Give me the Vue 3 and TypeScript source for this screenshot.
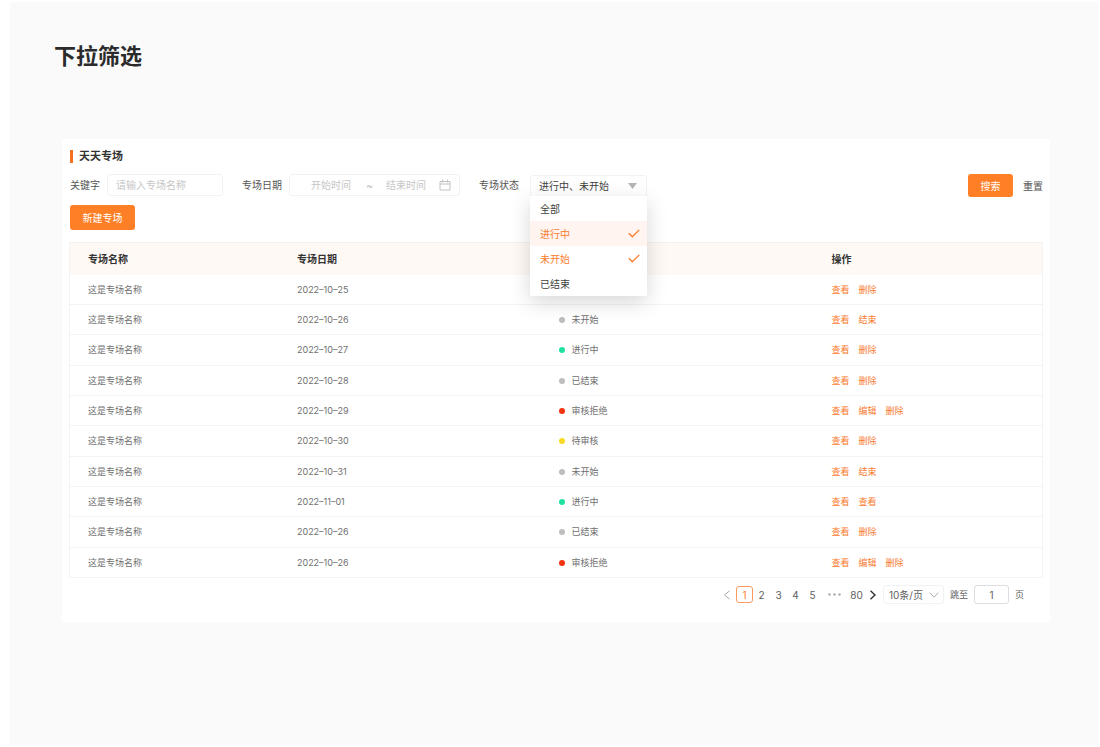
<script setup lang="ts">
import { computed, ref } from 'vue'

type Status = '未开始' | '进行中' | '已结束' | '审核拒绝' | '待审核'

interface Session {
  name: string
  date: string
  status?: Status
  actions: string[]
}

const tone: Record<Status, string> = {
  未开始: 'idle',
  已结束: 'idle',
  进行中: 'active',
  审核拒绝: 'rejected',
  待审核: 'pending',
}

const sessions: Session[] = [
  { name: '这是专场名称', date: '2022-10-25', actions: ['查看', '删除'] },
  { name: '这是专场名称', date: '2022-10-26', status: '未开始', actions: ['查看', '结束'] },
  { name: '这是专场名称', date: '2022-10-27', status: '进行中', actions: ['查看', '删除'] },
  { name: '这是专场名称', date: '2022-10-28', status: '已结束', actions: ['查看', '删除'] },
  { name: '这是专场名称', date: '2022-10-29', status: '审核拒绝', actions: ['查看', '编辑', '删除'] },
  { name: '这是专场名称', date: '2022-10-30', status: '待审核', actions: ['查看', '删除'] },
  { name: '这是专场名称', date: '2022-10-31', status: '未开始', actions: ['查看', '结束'] },
  { name: '这是专场名称', date: '2022-11-01', status: '进行中', actions: ['查看', '查看'] },
  { name: '这是专场名称', date: '2022-10-26', status: '已结束', actions: ['查看', '删除'] },
  { name: '这是专场名称', date: '2022-10-26', status: '审核拒绝', actions: ['查看', '编辑', '删除'] },
]

const formatDate = (date: string) => date.replace(/-/g, '–')

const keyword = ref('')
const startDate = ref('')
const endDate = ref('')

const options = ['全部', '进行中', '未开始', '已结束']
const chosen = ref<string[]>(['进行中', '未开始'])
const open = ref(true)
const chosenText = computed(() => chosen.value.join('、') || '全部')

function toggle(option: string) {
  if (option === '全部') {
    chosen.value = []
    return
  }
  chosen.value = chosen.value.includes(option)
    ? chosen.value.filter((item) => item !== option)
    : [...chosen.value, option]
}

function reset() {
  keyword.value = ''
  startDate.value = ''
  endDate.value = ''
  chosen.value = []
}

const pages = [1, 2, 3, 4, 5]
const lastPage = 80
const page = ref(1)
const pageSize = ref('10')
const jump = ref('1')
</script>

<template>
  <main class="canvas">
    <h1 class="heading">下拉筛选</h1>

    <section class="card">
      <h2 class="card-title">天天专场</h2>

      <form class="filters" @submit.prevent>
        <label class="label" for="keyword">关键字</label>
        <input id="keyword" v-model="keyword" class="field keyword" type="text" placeholder="请输入专场名称" />

        <label class="label spaced" for="start">专场日期</label>
        <div class="field range">
          <input id="start" v-model="startDate" type="text" placeholder="开始时间" />
          <span class="tilde">~</span>
          <input v-model="endDate" type="text" placeholder="结束时间" aria-label="结束时间" />
          <svg class="calendar" viewBox="0 0 12 12" aria-hidden="true">
            <path d="M1 2.500h10v8.500h-10zM1 5h10M3.500 .5v3M8.500 .5v3" />
          </svg>
        </div>

        <span id="status-label" class="label spaced">专场状态</span>
        <div class="status">
          <button
            class="status-trigger"
            type="button"
            aria-haspopup="listbox"
            aria-labelledby="status-label status-value"
            :aria-expanded="open"
            @click="open = !open"
          >
            <span id="status-value">{{ chosenText }}</span>
            <svg class="caret" viewBox="0 0 9 6" aria-hidden="true"><path d="M0 0h9L4.500 6z" /></svg>
          </button>
          <div v-if="open" class="menu" role="listbox" aria-multiselectable="true" aria-labelledby="status-label">
            <button
              v-for="option in options"
              :key="option"
              type="button"
              role="option"
              class="option"
              :class="{ chosen: chosen.includes(option), current: option === '进行中' }"
              :aria-selected="chosen.includes(option)"
              @click="toggle(option)"
            >
              {{ option }}
              <svg v-if="chosen.includes(option)" class="tick" viewBox="0 0 12 9" aria-hidden="true">
                <path d="M.8 4.300L4.300 7.800L11.300 .9" />
              </svg>
            </button>
          </div>
        </div>

        <div class="filter-actions">
          <button class="primary search" type="submit">搜索</button>
          <button class="plain" type="button" @click="reset">重置</button>
        </div>
      </form>

      <button class="primary create" type="button">新建专场</button>

      <table class="table">
        <thead>
          <tr>
            <th class="col-name" scope="col">专场名称</th>
            <th class="col-date" scope="col">专场日期</th>
            <th class="col-status" scope="col" aria-labelledby="status-label"></th>
            <th scope="col">操作</th>
          </tr>
        </thead>
        <tbody>
          <tr v-for="(row, index) in sessions" :key="index">
            <td>{{ row.name }}</td>
            <td>{{ formatDate(row.date) }}</td>
            <td>
              <span v-if="row.status" class="state">
                <i class="dot" :class="tone[row.status]"></i>{{ row.status }}
              </span>
            </td>
            <td>
              <span class="links">
                <a v-for="(action, n) in row.actions" :key="n" href="#" @click.prevent>{{ action }}</a>
              </span>
            </td>
          </tr>
        </tbody>
      </table>

      <nav class="pager" aria-label="分页">
        <button class="page prev" type="button" aria-label="上一页" :disabled="page === 1" @click="page--">
          <svg viewBox="0 0 8 10" aria-hidden="true"><path d="M6.500 .8L1.500 5L6.500 9.200" /></svg>
        </button>
        <button
          v-for="n in pages"
          :key="n"
          class="page"
          :class="{ selected: n === page }"
          type="button"
          @click="page = n"
        >
          {{ n }}
        </button>
        <svg class="dots" viewBox="0 0 13 3" aria-hidden="true">
          <circle cx="1.500" cy="1.500" r="1.200" /><circle cx="6.500" cy="1.500" r="1.200" /><circle cx="11.500" cy="1.500" r="1.200" />
        </svg>
        <button class="page" type="button" @click="page = lastPage">{{ lastPage }}</button>
        <button class="page next" type="button" aria-label="下一页" @click="page++">
          <svg viewBox="0 0 8 10" aria-hidden="true"><path d="M1.500 .8L6 5L1.500 9.200" /></svg>
        </button>
        <span class="size">
          <select v-model="pageSize" aria-label="每页条数">
            <option value="10">10条/页</option>
            <option value="20">20条/页</option>
            <option value="50">50条/页</option>
          </select>
          <svg viewBox="0 0 10 6" aria-hidden="true"><path d="M.6 .7L5 5.200L9.400 .7" /></svg>
        </span>
        <label for="jump">跳至</label>
        <input id="jump" v-model="jump" class="jump" type="text" inputmode="numeric" />
        <span>页</span>
      </nav>
    </section>
  </main>
</template>

<style>
body {
  margin: 0;
  background: #fff;
}
</style>

<style scoped>
.canvas,
.canvas * {
  box-sizing: border-box;
}

.canvas {
  min-height: calc(100vh - 4px);
  margin: 2px 2px 2px 10px;
  padding: 38px 48px 48px 52px;
  background: #fafafa;
  color: #555;
  font-family: Inter, "Noto Sans CJK SC", sans-serif;
  font-size: 10px;
  line-height: 16px;
}

button,
input,
select {
  margin: 0;
  padding: 0;
  border: 0;
  background: none;
  color: inherit;
  font: inherit;
  outline: 0;
}

button {
  cursor: pointer;
}

svg {
  display: block;
  fill: none;
  stroke: currentColor;
}

.heading {
  margin: 0 -8px 67px;
  color: #2b2b2b;
  font-size: 22px;
  font-weight: 700;
  line-height: 32px;
}

.card {
  padding: 9px 7px 18px;
  background: #fff;
}

.card-title {
  display: flex;
  align-items: center;
  gap: 6px;
  margin: 0 0 10px 1px;
  color: #333;
  font-size: 11px;
  font-weight: 700;
  line-height: 16px;
}

.card-title::before {
  width: 3px;
  height: 13px;
  background: #f37021;
  content: "";
}

.filters {
  display: flex;
  align-items: flex-start;
  height: 23px;
  margin-left: 1px;
}

.label {
  line-height: 22px;
  white-space: nowrap;
}

.spaced {
  margin-left: 19px;
}

.field {
  height: 22px;
  margin-left: 7px;
  border: 1px solid #f2f2f2;
  border-radius: 3px;
}

.keyword {
  width: 116px;
  padding: 0 8px;
}

::placeholder {
  color: #c6c6c6;
  opacity: 1;
}

.range {
  display: flex;
  align-items: center;
  width: 171px;
  padding: 0 8px 0 21px;
}

.range input {
  width: 42px;
}

.tilde {
  width: 33px;
  color: #bbb;
  text-align: center;
}

.calendar {
  width: 12px;
  height: 12px;
  margin-left: auto;
  color: #c2c2c2;
}

.status {
  position: relative;
  align-self: flex-end;
  width: 117px;
  margin-left: 11px;
  color: #404040;
}

.status-trigger {
  display: flex;
  align-items: center;
  justify-content: space-between;
  width: 100%;
  height: 22px;
  padding: 0 9px 0 8px;
  border: 1px solid #f2f2f2;
  border-radius: 3px;
}

.caret {
  width: 9px;
  height: 6px;
  fill: #b5b5b5;
  stroke: none;
}

.menu {
  position: absolute;
  z-index: 2;
  top: calc(100% - 1px);
  right: 0;
  left: 0;
  background: #fff;
  box-shadow: 0 6px 20px rgba(0, 0, 0, 0.16);
}

.option {
  display: flex;
  align-items: center;
  justify-content: space-between;
  width: 100%;
  height: 25px;
  padding: 0 7px 0 10px;
}

.option.chosen {
  color: #fa7b2e;
}

.option.current {
  background: #fff4ef;
}

.tick {
  width: 12px;
  height: 9px;
  stroke-width: 1.3;
}

.filter-actions {
  display: flex;
  gap: 10px;
  margin-left: auto;
}

.primary {
  border-radius: 3px;
  background: #ff7f27;
  color: #fff;
}

.search {
  width: 45px;
  height: 23px;
}

.create {
  display: block;
  width: 65px;
  height: 25px;
  margin: 8px 0 12px 1px;
}

.table {
  width: 100%;
  table-layout: fixed;
  border: 1px solid #f3f3f3;
  border-spacing: 0;
  color: #707070;
  font-size: 9px;
}

th,
td {
  padding: 0 0 0 18px;
  text-align: left;
}

th {
  height: 32px;
  background: #fff9f6;
  color: #333;
  font-size: 10px;
  font-weight: 700;
}

td {
  height: 30px;
  border-bottom: 1px solid #f3f3f3;
}

tr:nth-child(3n) td {
  height: 31px;
}

tr:last-child td {
  height: 29px;
  border-bottom: 0;
}

.col-name {
  width: 21.5%;
}

.col-date {
  width: 27%;
}

.col-status {
  width: 28%;
}

.state {
  display: flex;
  align-items: center;
  gap: 6px;
}

.dot {
  width: 6px;
  height: 6px;
  border-radius: 50%;
}

.idle {
  background: #bdbdbd;
}

.active {
  background: #22e0a0;
}

.rejected {
  background: #f2330d;
}

.pending {
  background: #f9d923;
}

.links {
  display: flex;
  gap: 9px;
}

a {
  color: #fa7b2e;
  text-decoration: none;
}

.pager {
  display: flex;
  align-items: center;
  justify-content: flex-end;
  height: 19px;
  margin: 7px 19px 0 0;
  color: #606060;
  font-size: 9px;
}

.page {
  display: grid;
  place-items: center;
  width: 17px;
  height: 17px;
  border-radius: 3px;
  font-size: 10px;
}

.page.selected {
  border: 1px solid #fa9a5e;
  color: #fa7b2e;
}

.page svg {
  width: 8px;
  height: 10px;
}

.prev {
  color: #aaa;
}

.next {
  color: #333;
}

.next svg {
  stroke-width: 1.4;
}

.dots {
  width: 13px;
  height: 3px;
  margin: 0 7px;
  fill: #aaa;
  stroke: none;
}

.size {
  display: grid;
  align-items: center;
  width: 61px;
  height: 19px;
  margin: 0 6px 0 1px;
  border: 1px solid #f2f2f2;
  border-radius: 3px;
}

.size select {
  grid-area: 1 / 1;
  height: 17px;
  padding: 0 18px 0 5px;
  appearance: none;
  font-size: 10px;
}

.size svg {
  grid-area: 1 / 1;
  justify-self: end;
  width: 10px;
  height: 6px;
  margin-right: 5px;
  color: #aaa;
  pointer-events: none;
}

.jump {
  width: 35px;
  height: 19px;
  margin: 0 6px;
  border: 1px solid #ddd;
  border-radius: 3px;
  font-size: 10px;
  text-align: center;
}
</style>
